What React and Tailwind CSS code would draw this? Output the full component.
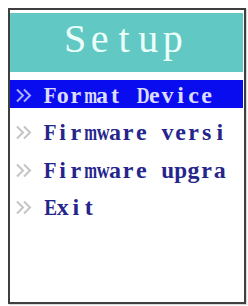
const items = ["Format Device", "Firmware versi", "Firmware upgra", "Exit"];

const serif = { fontFamily: '"Liberation Serif", "DejaVu Serif", serif' };

// the device font is fixed-width, so each letter sits in its own cell;
// wide letters get squeezed so they stay inside it
const squeeze = {
  F: "scale-x-[0.87]",
  m: "scale-x-[0.64]",
  D: "scale-x-[0.74]",
  w: "scale-x-[0.74]",
  u: "scale-x-[0.96]",
  p: "scale-x-[0.96]",
  E: "scale-x-[0.8]",
};

function MonoText({ text, cell, fit, className }) {
  return (
    <span className={`flex ${className}`} style={serif}>
      {text.split("").map((ch, i) => (
        <span key={i} className={`inline-block text-center ${cell} ${fit ? squeeze[ch] || "" : ""}`}>
          {ch === " " ? "\u00a0" : ch}
        </span>
      ))}
    </span>
  );
}

function Chevrons({ color }) {
  return (
    <svg width="17" height="15" viewBox="0 0 17 15" className="shrink-0">
      <path d="M1 1.5 L7 7.5 L1 13.5 M8 1.5 L14 7.5 L8 13.5" fill="none" stroke={color} strokeWidth="2" />
    </svg>
  );
}

export default function App() {
  return (
    <div className="w-[248px] h-[306px] bg-white pt-[8px] pl-[8px]">
      <div className="w-[238px] h-[296px] border-2 border-[#3f3f3f] bg-white pt-[3px] pr-[1px] shadow-[1px_1px_1px_rgba(0,0,0,0.15)]">
        {/* title bar */}
        <div className="h-[59px] bg-[#62c8c3] flex items-start pt-[6px] pl-[53px]">
          <MonoText text="Setup" cell="w-[24.4px]" className="text-[40px] leading-none text-[#ecfffb]" />
        </div>

        {/* menu */}
        <div className="mt-[8px] flex flex-col gap-[9.33px]">
          {items.map((label, i) => {
            const sel = i === 0;
            return (
              <div
                key={label}
                className={`h-[28px] flex items-start pl-[6px] ${sel ? "bg-[#0a0cf0]" : ""}`}
              >
                <div className="mt-[8px]">
                  <Chevrons color={sel ? "#a9b0ff" : "#c4c4c4"} />
                </div>
                <MonoText
                  text={label}
                  cell="w-[13.1px]"
                  fit
                  className={`ml-[10px] mt-[3px] text-[24px] leading-none font-bold whitespace-nowrap ${sel ? "text-[#dcdcff]" : "text-[#25258c]"}`}
                />
              </div>
            );
          })}
        </div>
      </div>
    </div>
  );
}
